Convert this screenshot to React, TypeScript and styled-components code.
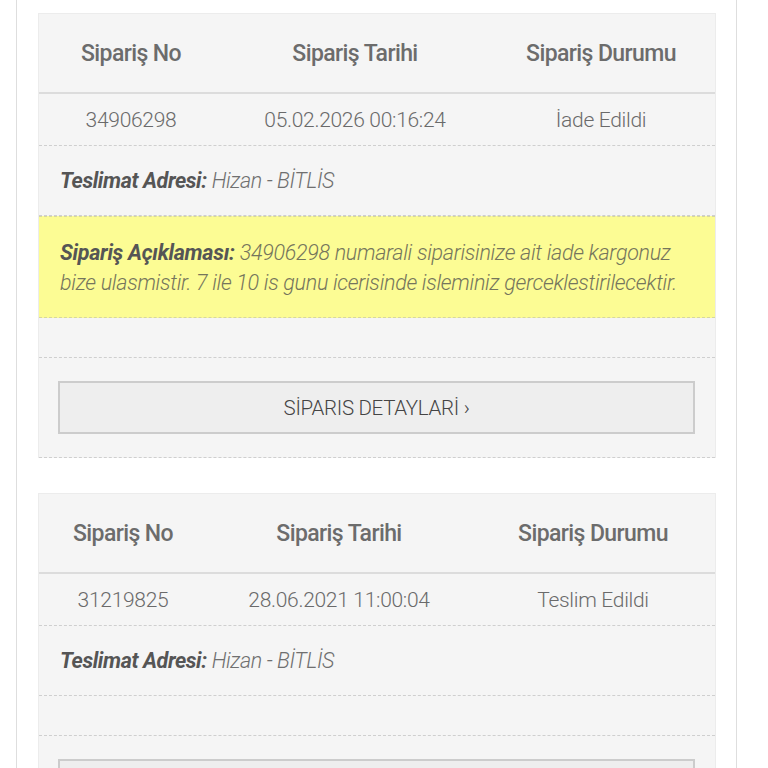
import React from 'react';
import styled, { createGlobalStyle } from 'styled-components';

const GlobalStyle = createGlobalStyle`
  html, body {
    margin: 0;
    padding: 0;
    background: #ffffff;
    font-family: Roboto, "Noto Sans", sans-serif;
  }
`;

interface Order {
  no: string;
  date: string;
  status: string;
  address: string;
  note?: string;
  columns: string;
}

const orders: Order[] = [
  {
    no: '34906298',
    date: '05.02.2026 00:16:24',
    status: 'İade Edildi',
    address: 'Hizan - BİTLİS',
    note: '34906298 numarali siparisinize ait iade kargonuz bize ulasmistir. 7 ile 10 is gunu icerisinde isleminiz gerceklestirilecektir.',
    columns: '184px 264px 1fr',
  },
  {
    no: '31219825',
    date: '28.06.2021 11:00:04',
    status: 'Teslim Edildi',
    address: 'Hizan - BİTLİS',
    columns: '168px 264px 1fr',
  },
];

const Page = styled.div`
  margin: 0 31px 0 16px;
  min-height: 768px;
  padding: 13px 20px 0 21px;
  border-left: 1px solid #dedede;
  border-right: 1px solid #dedede;
  display: flex;
  flex-direction: column;
  gap: 35px;
`;

const Card = styled.div`
  background: #f5f5f5;
  border: 1px solid #ececec;
  border-bottom: none;
`;

const Row = styled.div<{ $columns: string }>`
  display: grid;
  grid-template-columns: ${(p) => p.$columns};
  align-items: center;
  text-align: center;
`;

const HeadRow = styled(Row)`
  height: 78px;
  border-bottom: 2px solid #dcdcdc;
`;

const DataRow = styled(Row)`
  height: 51px;
  border-bottom: 1px dashed #cfcfcf;
`;

const HeadCell = styled.div`
  font-size: 23px;
  font-weight: 500;
  color: #6c6c6c;
  letter-spacing: -0.6px;
`;

const DataCell = styled.div`
  font-size: 21px;
  font-weight: 300;
  color: #6a6a6a;
  letter-spacing: -0.3px;
`;

const Line = styled.div`
  padding: 0 21px;
  border-bottom: 1px dashed #cfcfcf;
  font-size: 21.5px;
  font-style: italic;
  font-weight: 300;
  color: #6f6f6f;
  letter-spacing: -0.4px;
`;

const AddressLine = styled(Line)`
  height: 69px;
  display: flex;
  align-items: center;
`;

const NoteLine = styled(Line)`
  background: #fcfc94;
  border-top: 1px dashed #d6d6a0;
  border-bottom-color: #d6d6a0;
  padding: 21px 30px 19px 21px;
  line-height: 30px;
  color: #75755c;
  letter-spacing: -0.3px;
`;

const Label = styled.b`
  font-weight: 700;
  color: #555555;
`;

const Spacer = styled.div`
  height: 39px;
  border-bottom: 1px dashed #cfcfcf;
`;

const ButtonRow = styled.div`
  padding: 23px 20px 23px 19px;
  border-bottom: 1px dashed #cfcfcf;
`;

const DetailButton = styled.button`
  width: 100%;
  height: 53px;
  background: #eeeeee;
  border: 2px solid #cccccc;
  font-family: Roboto, "Noto Sans", sans-serif;
  font-size: 20.5px;
  font-weight: 300;
  color: #444444;
  letter-spacing: -0.3px;
  cursor: pointer;
`;

const OrderCard: React.FC<{ order: Order }> = ({ order }) => (
  <Card>
    <HeadRow $columns={order.columns}>
      <HeadCell>Sipariş No</HeadCell>
      <HeadCell>Sipariş Tarihi</HeadCell>
      <HeadCell>Sipariş Durumu</HeadCell>
    </HeadRow>
    <DataRow $columns={order.columns}>
      <DataCell>{order.no}</DataCell>
      <DataCell>{order.date}</DataCell>
      <DataCell>{order.status}</DataCell>
    </DataRow>
    <AddressLine>
      <span>
        <Label>Teslimat Adresi:</Label> {order.address}
      </span>
    </AddressLine>
    {order.note && (
      <NoteLine>
        <Label>Sipariş Açıklaması:</Label> {order.note}
      </NoteLine>
    )}
    <Spacer />
    <ButtonRow>
      <DetailButton>SİPARIS DETAYLARİ ›</DetailButton>
    </ButtonRow>
  </Card>
);

export default function App() {
  return (
    <>
      <GlobalStyle />
      <Page>
        {orders.map((o) => (
          <OrderCard key={o.no} order={o} />
        ))}
      </Page>
    </>
  );
}
